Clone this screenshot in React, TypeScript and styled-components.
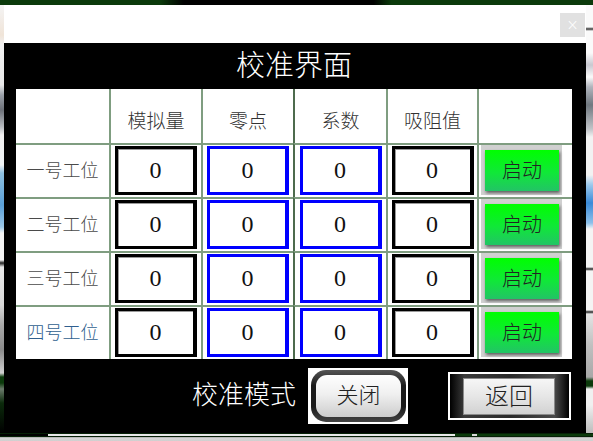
import React from "react";
import styled, { createGlobalStyle } from "styled-components";

const GlobalStyle = createGlobalStyle`
  html, body {
    margin: 0;
    padding: 0;
    width: 593px;
    height: 441px;
    overflow: hidden;
    background: #000;
  }
  * { box-sizing: border-box; }
`;

const FONT = `"Liberation Serif", "Noto Sans CJK SC", serif`;

const Page = styled.div`
  width: 593px;
  height: 441px;
  display: flex;
  flex-direction: column;
  font-family: ${FONT};
  font-weight: 300;
`;

const TopBar = styled.div`
  height: 5px;
  flex: none;
  background: linear-gradient(
    to right,
    #0b3a0b 0%,
    #0b3a0b 27%,
    #000 31%,
    #000 63%,
    #0b3a0b 66%,
    #0b3a0b 100%
  );
`;

const Middle = styled.div`
  flex: 1;
  display: flex;
  min-height: 0;
`;

const Strip = styled.div<{ $w: number; $bg: string }>`
  width: ${(p) => p.$w}px;
  flex: none;
  background: ${(p) => p.$bg};
`;

const Dialog = styled.div`
  width: 582px;
  flex: none;
  display: flex;
  flex-direction: column;
`;

const TitleBar = styled.div`
  height: 38px;
  background: #fff;
  display: flex;
  justify-content: flex-end;
  align-items: flex-start;
  padding: 8px 1px 0 0;
`;

const CloseX = styled.div`
  width: 25px;
  height: 24px;
  background: #e1e1e1;
  color: #fff;
  font-family: "DejaVu Sans", sans-serif;
  font-size: 15px;
  display: flex;
  align-items: center;
  justify-content: center;
`;

const Body = styled.div`
  flex: 1;
  background: #000;
  display: flex;
  flex-direction: column;
  padding: 0 14px 0 12px;
`;

const Heading = styled.div`
  height: 46px;
  display: flex;
  align-items: center;
  justify-content: center;
  color: #fff;
  font-size: 29px;
  line-height: 1;
`;

const Table = styled.div`
  width: 556px;
  height: 270px;
  background: #fff;
  display: grid;
  grid-template-columns: 93px 92px 92px 93px 91px 95px;
  grid-template-rows: repeat(5, 54px);
`;

const Cell = styled.div<{ $left: boolean; $top: boolean; $dark?: boolean }>`
  display: flex;
  align-items: center;
  justify-content: center;
  border-left: ${(p) => (p.$left ? `2px solid ${p.$dark ? "#4d6b4d" : "#7f9d80"}` : "none")};
  border-top: ${(p) => (p.$top ? "2px solid #7f9d80" : "none")};
`;

const HeadText = styled.span`
  font-size: 19px;
  line-height: 1;
  color: #333;
  padding-top: 10px;
`;

const RowLabel = styled.span<{ $color: string }>`
  font-size: 18px;
  line-height: 1;
  color: ${(p) => p.$color};
`;

const ValueBox = styled.div<{ $blue: boolean }>`
  width: 82px;
  height: 49px;
  border: 3px solid ${(p) => (p.$blue ? "#0000ff" : "#000")};
  border-right-width: 4px;
  background: #fff;
  box-shadow: ${(p) => (p.$blue ? "none" : "inset 1px 1px 0 #9a9a9a")};
  display: flex;
  align-items: center;
  justify-content: center;
  font-size: 24px;
  font-weight: 400;
  color: #111;
  line-height: 1;
  margin-top: -2px;
`;

const StartCell = styled(Cell)`
  justify-content: flex-start;
  padding-left: 2px;
`;

const StartFrame = styled.div`
  width: 81px;
  height: 50px;
  background: #d0d0d0;
  padding: 5px 3px 4px 4px;
  margin-top: -2px;
`;

const StartFace = styled.div`
  width: 100%;
  height: 100%;
  background: linear-gradient(to bottom, #00ff00 0%, #10e838 55%, #22c466 100%);
  box-shadow: 1px 2px 3px rgba(0, 0, 0, 0.55);
  display: flex;
  align-items: center;
  justify-content: center;
  font-size: 20px;
  color: #222;
  line-height: 1;
`;

const Footer = styled.div`
  flex: 1;
  display: flex;
  align-items: center;
  justify-content: flex-end;
  padding: 0 1px 0 0;
`;

const ModeText = styled.span`
  color: #fff;
  font-size: 26px;
  line-height: 1;
  margin-right: 12px;
`;

const CloseBtn = styled.div`
  width: 100px;
  height: 56px;
  background: #fff;
  padding: 2px 2px 2px 3px;
  margin-right: 40px;
`;

const CloseRing = styled.div`
  width: 100%;
  height: 100%;
  border-radius: 15px;
  background: linear-gradient(to bottom, #555, #1a1a1a 30%, #1a1a1a 70%, #444);
  padding: 5px;
`;

const CloseFace = styled.div`
  width: 100%;
  height: 100%;
  border-radius: 11px;
  background: linear-gradient(to bottom, #fefefe 0%, #f0f0f0 45%, #cdcdcd 100%);
  display: flex;
  align-items: center;
  justify-content: center;
  font-size: 22px;
  color: #222;
  line-height: 1;
`;

const BackBtn = styled.div`
  width: 123px;
  height: 48px;
  background: #fff;
  padding: 2px;
`;

const BackFrame = styled.div`
  width: 100%;
  height: 100%;
  background: linear-gradient(to right, #000 0%, #3a3a3a 12%, #2a2a2a 50%, #4a4a4a 88%, #000 100%);
  padding: 4px 14px 3px 13px;
`;

const BackFace = styled.div`
  width: 100%;
  height: 100%;
  border: 1px solid #8a8a8a;
  background: linear-gradient(to bottom, #f6f6f6 0%, #e6e6e6 50%, #d2d2d2 100%);
  display: flex;
  align-items: center;
  justify-content: center;
  font-size: 24px;
  color: #222;
  line-height: 1;
`;

const BottomBar = styled.div`
  height: 8px;
  flex: none;
  display: flex;
  flex-direction: column;
`;

const BottomLine = styled.div`
  height: 4px;
  background: linear-gradient(
    to right,
    #000 0px,
    #000 48px,
    #e8e8e8 48px,
    #e8e8e8 455px,
    #0b3a0b 455px,
    #0b3a0b 472px,
    #d8d8d8 472px,
    #d8d8d8 477px,
    #0b3a0b 477px
  );
  background-size: 100% 2px;
  background-repeat: no-repeat;
  background-position: 0 1px;
  background-color: #062006;
`;

const BottomGray = styled.div`
  flex: 1;
  background: linear-gradient(to bottom, #9a9a9a 0px, #d6d6d6 1px, #cfcfcf 100%);
`;

const leftBg = `linear-gradient(to bottom,
  #f4f4f4 0px, #f0e4d8 30px, #f2f2f2 40px, #e8e8e8 80px,
  #9aa0a8 90px, #6c7078 105px, #b8bcc0 122px, #f0f0f0 130px,
  #eef2f4 160px, #8ec0e0 168px, #5aa0d8 200px, #9cc8e8 222px,
  #f4f4f4 228px, #f4f4f4 255px, #222 258px, #e8e8e8 262px,
  #d8d8d8 300px, #a8a8a8 320px, #8a8a8a 345px, #cfcfcf 368px,
  #0b3a0b 372px, #0b3a0b 378px, #6a7a6a 384px, #0b2a0b 398px, #000 428px)`;

const rightBg = `linear-gradient(to bottom,
  #fafafa 0px, #fafafa 22px, #333 24px, #fafafa 26px, #fafafa 48px,
  #c8c8d0 60px, #fafafa 72px, #b0b4bc 82px, #707880 100px, #c0c4c8 124px,
  #f2f2f2 132px, #f2f2f2 170px, #9ac8ec 180px, #3a8ad8 198px, #8cc0ea 218px,
  #f4f4f4 224px, #f4f4f4 262px, #222 264px, #f4f4f4 266px,
  #f4f4f4 305px, #222 307px, #e4e4e4 309px, #c0c0c0 340px, #a8a8a8 372px,
  #0b3a0b 376px, #0b3a0b 381px, #f0f0f0 384px, #f0f0f0 400px, #bcbcbc 428px)`;

const headers = ["", "模拟量", "零点", "系数", "吸阻值", ""];
const rows = [
  { label: "一号工位", color: "#4a4a4a" },
  { label: "二号工位", color: "#4a4a4a" },
  { label: "三号工位", color: "#4a4a4a" },
  { label: "四号工位", color: "#2f5f8f" },
];
const blueCols = [false, true, true, false];

export default function App() {
  return (
    <>
      <GlobalStyle />
      <Page>
        <TopBar />
        <Middle>
          <Strip $w={4} $bg={leftBg} />
          <Dialog>
            <TitleBar>
              <CloseX>×</CloseX>
            </TitleBar>
            <Body>
              <Heading>校准界面</Heading>
              <Table>
                {headers.map((h, i) => (
                  <Cell key={`h${i}`} $left={i > 0} $top={false} $dark={i === 3}>
                    {h && <HeadText>{h}</HeadText>}
                  </Cell>
                ))}
                {rows.map((r, ri) => (
                  <React.Fragment key={r.label}>
                    <Cell $left={false} $top>
                      <RowLabel $color={r.color}>{r.label}</RowLabel>
                    </Cell>
                    {blueCols.map((blue, ci) => (
                      <Cell key={ci} $left $top $dark={ci === 2}>
                        <ValueBox $blue={blue}>0</ValueBox>
                      </Cell>
                    ))}
                    <StartCell $left $top>
                      <StartFrame>
                        <StartFace>启动</StartFace>
                      </StartFrame>
                    </StartCell>
                  </React.Fragment>
                ))}
              </Table>
              <Footer>
                <ModeText>校准模式</ModeText>
                <CloseBtn>
                  <CloseRing>
                    <CloseFace>关闭</CloseFace>
                  </CloseRing>
                </CloseBtn>
                <BackBtn>
                  <BackFrame>
                    <BackFace>返回</BackFace>
                  </BackFrame>
                </BackBtn>
              </Footer>
            </Body>
          </Dialog>
          <Strip $w={7} $bg={rightBg} />
        </Middle>
        <BottomBar>
          <BottomLine />
          <BottomGray />
        </BottomBar>
      </Page>
    </>
  );
}
